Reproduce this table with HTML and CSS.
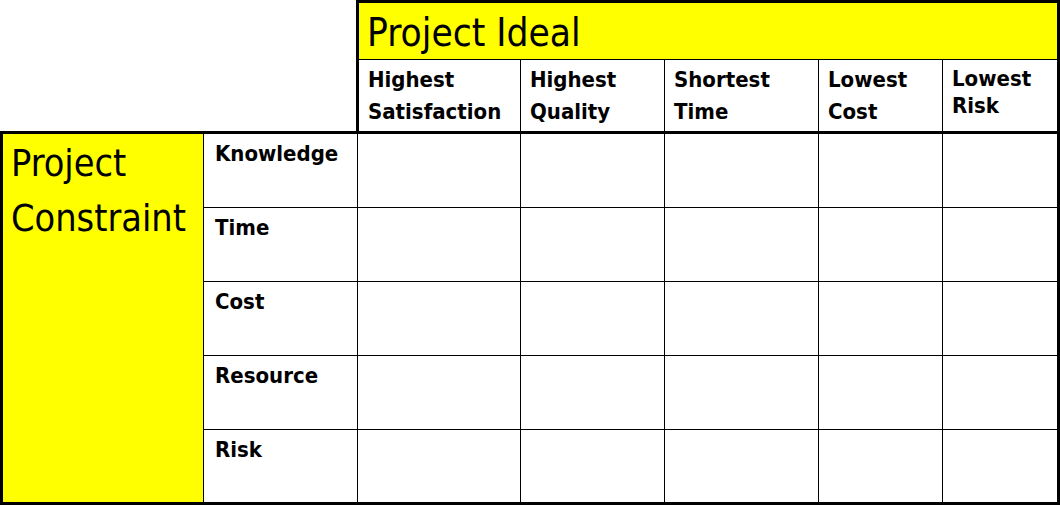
FILE: index.html
```html
<!DOCTYPE html>
<html>
<head>
<meta charset="utf-8">
<link rel="stylesheet" href="styles.css">
</head>
<body>
<div class="page">
  <div class="top">
    <div class="ideal">
      <div class="ideal-title">Project Ideal</div>
      <div class="ideal-heads">
        <div class="head">Highest<br>Satisfaction</div>
        <div class="head">Highest<br>Quality</div>
        <div class="head">Shortest<br>Time</div>
        <div class="head">Lowest<br>Cost</div>
        <div class="head head-tight">Lowest<br>Risk</div>
      </div>
    </div>
  </div>
  <div class="matrix">
    <div class="constraint">Project<br>Constraint</div>
    <div class="label">Knowledge</div>
    <div class="cell"></div><div class="cell"></div><div class="cell"></div><div class="cell"></div><div class="cell"></div>
    <div class="label">Time</div>
    <div class="cell"></div><div class="cell"></div><div class="cell"></div><div class="cell"></div><div class="cell"></div>
    <div class="label">Cost</div>
    <div class="cell"></div><div class="cell"></div><div class="cell"></div><div class="cell"></div><div class="cell"></div>
    <div class="label">Resource</div>
    <div class="cell"></div><div class="cell"></div><div class="cell"></div><div class="cell"></div><div class="cell"></div>
    <div class="label">Risk</div>
    <div class="cell"></div><div class="cell"></div><div class="cell"></div><div class="cell"></div><div class="cell"></div>
  </div>
</div>
</body>
</html>
```
FILE: styles.css
```css
html, body {
  margin: 0;
  padding: 0;
  background: #fff;
}
.page {
  width: 1060px;
  height: 505px;
  font-family: "DejaVu Sans Condensed", "DejaVu Sans", sans-serif;
  font-stretch: condensed;
  color: #000;
}
.top {
  display: flex;
  justify-content: flex-end;
}
.ideal {
  width: 704px;
  box-sizing: border-box;
  border: 3px solid #000;
  border-bottom: 0;
}
.ideal-title {
  height: 57px;
  box-sizing: border-box;
  background: #ffff00;
  border-bottom: 1px solid #000;
  font-size: 38.5px;
  padding: 7px 0 0 8px;
  line-height: normal;
}
.ideal-heads {
  display: grid;
  grid-template-columns: 161px 143px 153px 123px 114px;
  gap: 1px;
  background: #000;
  height: 71px;
}
.head {
  background: #fff;
  font-weight: bold;
  font-size: 22px;
  line-height: 32px;
  padding: 4px 0 0 9px;
}
.head-tight {
  line-height: 26.5px;
  padding-top: 6px;
}
.matrix {
  display: grid;
  grid-template-columns: 200px 153px 162px 143px 153px 123px 114px;
  grid-template-rows: 73px 73px 73px 73px 72px;
  gap: 1px;
  background: #000;
  border: 3px solid #000;
}
.constraint {
  grid-row: 1 / -1;
  background: #ffff00;
  font-size: 37.5px;
  line-height: 55px;
  padding: 2px 0 0 8px;
}
.label {
  background: #fff;
  font-weight: bold;
  font-size: 22px;
  line-height: normal;
  padding: 7px 0 0 11px;
}
.cell {
  background: #fff;
}
```
